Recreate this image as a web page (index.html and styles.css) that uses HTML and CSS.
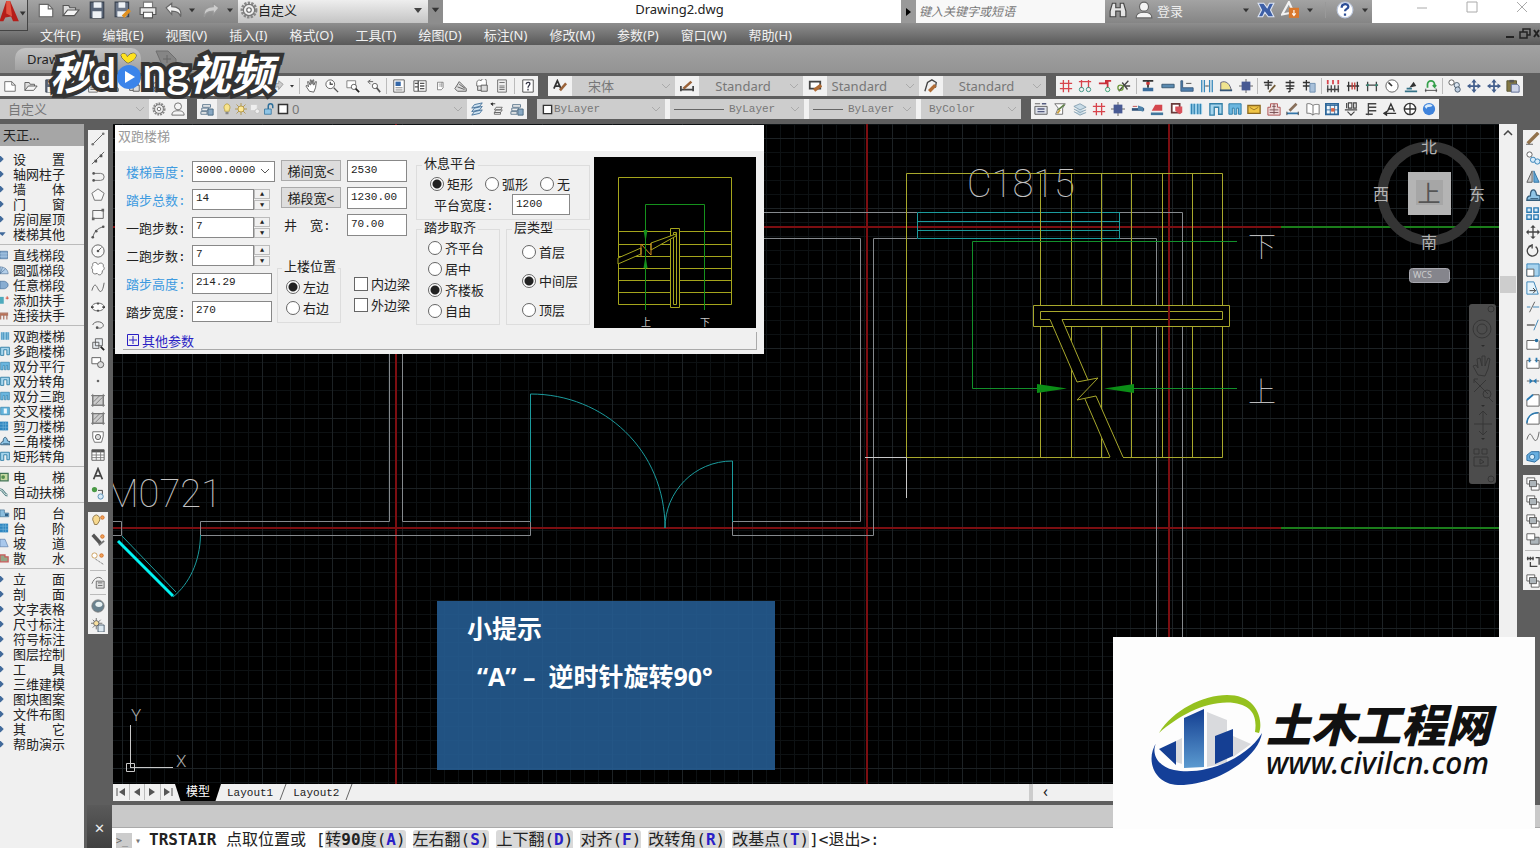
FILE: index.html
```html
<!DOCTYPE html>
<html lang="zh-CN">
<head>
    <meta charset="UTF-8">
    <meta name="viewport" content="width=device-width, initial-scale=1.0">
    <title>Drawing2.dwg</title>
    <link rel="stylesheet" href="styles.css">
</head>
<body>
    <svg class="sprite" aria-hidden="true">
        <!-- file and view -->
        <symbol id="new" viewBox="0 0 16 16"><path d="M2 3h8l4 4v7H2z" fill="#fff" stroke="#666"/><path d="M10 3v4h4" fill="none" stroke="#666"/></symbol>
        <symbol id="open" viewBox="0 0 16 16"><path d="M1 13V4h5l1 2h5v2" fill="#ddd" stroke="#555"/><path d="M1 13l4-5h10l-4 5z" fill="#f4f4f4" stroke="#555"/></symbol>
        <symbol id="save" viewBox="0 0 16 16"><path d="M2 1h12v14H2z" fill="#596577" stroke="#39424f"/><path d="M5 1h7v5H5zM4 9h8v6H4z" fill="#eef2f6"/></symbol>
        <symbol id="saveas" viewBox="0 0 16 16"><path d="M1 1h12v13H1z" fill="#6b7688" stroke="#39424f"/><path d="M4 1h6v5H4zM3 9h8v5H3z" fill="#eef2f6"/><path d="M8 14l6-6" stroke="#e09020" stroke-width="3"/></symbol>
        <symbol id="print" viewBox="0 0 16 16"><path d="M4 1h8v5H4z" fill="#fff" stroke="#777"/><path d="M1 6h14v6H1z" fill="#e8e8e8" stroke="#555"/><path d="M4 10h8v5H4z" fill="#fff" stroke="#555"/></symbol>
        <symbol id="undo" viewBox="0 0 16 16"><path d="M1 6l5-4v3c5 0 9 2 8 9-1-4-4-5-8-5v3z" fill="#f0f0f0" stroke="#666"/></symbol>
        <symbol id="redo" viewBox="0 0 16 16"><path d="M15 6l-5-4v3c-5 0-9 2-8 9 1-4 4-5 8-5v3z" fill="#ccc" stroke="#999"/></symbol>
        <symbol id="drop" viewBox="0 0 16 16"><path d="M4 6h8l-4 5z" fill="#333"/></symbol>
        <symbol id="gear" viewBox="0 0 16 16"><circle cx="8" cy="8" r="6" fill="none" stroke="#888" stroke-width="3" stroke-dasharray="2 1"/><circle cx="8" cy="8" r="5" fill="#eee" stroke="#777"/><circle cx="8" cy="8" r="2" fill="#fff" stroke="#666"/></symbol>
        <symbol id="hand" viewBox="0 0 16 16"><path d="M5 14L1 8l1-1 2 2-1-6h1l2 4V1h1l1 5 1-5h1v6l2-4h1l-1 7-2 5z" fill="#fff" stroke="#555"/></symbol>
        <symbol id="zoomr" viewBox="0 0 16 16"><circle cx="6" cy="6" r="5" fill="#fff" stroke="#555"/><path d="M6 3v3h3M10 10l5 5" fill="none" stroke="#555" stroke-width="1.5"/></symbol>
        <symbol id="zoomw" viewBox="0 0 16 16"><path d="M1 2h10v8H1z" fill="#fff" stroke="#777"/><circle cx="9" cy="9" r="3" fill="#fff" stroke="#555"/><path d="M11 11l4 4" stroke="#222" stroke-width="2"/></symbol>
        <symbol id="zoomp" viewBox="0 0 16 16"><path d="M7 3H2m2-2L1 3l3 3" fill="none" stroke="#555"/><circle cx="9" cy="8" r="3" fill="#fff" stroke="#555"/><path d="M11 10l4 5" stroke="#555" stroke-width="2"/></symbol>
        <symbol id="props" viewBox="0 0 16 16"><path d="M2 1h12v14H2z" fill="#fff" stroke="#555"/><path d="M4 3h6v5H4z" fill="#3467a8"/><path d="M4 10h8M4 12.500h8" stroke="#777"/></symbol>
        <symbol id="center" viewBox="0 0 16 16"><path d="M1 2h14v12H1z" fill="#fff" stroke="#555"/><path d="M6 2v12M8 5h5M8 8h5M8 11h5M2 5h4M2 9h4" stroke="#555" stroke-width="1.500"/></symbol>
        <symbol id="palette" viewBox="0 0 16 16"><path d="M4 2h9v9l-3 3H4z" fill="#fff" stroke="#555"/><path d="M6 5h5M6 8h5M11 2v8" stroke="#777"/></symbol>
        <symbol id="sheet" viewBox="0 0 16 16"><path d="M1 11l5-8 8 8v3H4z" fill="#ddd" stroke="#555"/><path d="M4 9l8 3M6 6l7 5" stroke="#555"/></symbol>
        <symbol id="markup" viewBox="0 0 16 16"><path d="M2 4a3 3 0 0 1 5-2 3 3 0 0 1 6 1v5H2z" fill="#fff" stroke="#666"/><path d="M7 7h7v7H7zM3 8v5h4" fill="#ddd" stroke="#555"/></symbol>
        <symbol id="calc" viewBox="0 0 16 16"><path d="M3 1h10v14H3z" fill="#eee" stroke="#666"/><path d="M5 4h6M5 8h6M5 10h6M5 12h6" stroke="#666"/></symbol>
        <symbol id="help" viewBox="0 0 16 16"><path d="M2 1h12v14H2z" fill="#fff" stroke="#444"/><path d="M6 6c0-3 5-3 4 0 0 1-2 2-2 4M8 11v2" fill="none" stroke="#334" stroke-width="1.500"/></symbol>
        <symbol id="person" viewBox="0 0 16 16"><circle cx="8" cy="5" r="4" fill="#f4f4f4" stroke="#666"/><path d="M1 15c0-4 3-5 7-5s7 1 7 5z" fill="#f4f4f4" stroke="#666"/></symbol>
        <symbol id="find" viewBox="0 0 16 16"><path d="M3 2h3v4h4V2h3l2 7v5h-5V9H6v5H1V9z" fill="#e4e4e4" stroke="#444"/></symbol>
        <symbol id="exchange" viewBox="0 0 16 16"><path d="M1 2h5l3 4 2-4h4l-3 6 3 6h-5l-3-4-2 4H1l3-6z" fill="#3d5fa6" stroke="#dde5f5"/></symbol>
        <symbol id="online" viewBox="0 0 16 16"><path d="M1 12L7 1l4 9z" fill="none" stroke="#f2f2f2" stroke-width="2"/><path d="M7 6h9v9H7z" fill="#d9782d"/><path d="M11.500 8v4M10 11l1.500 2 1.500-2" stroke="#fff" fill="none"/></symbol>
        <symbol id="question" viewBox="0 0 16 16"><circle cx="8" cy="8" r="7" fill="#fff" stroke="#bcc7dd"/><path d="M5 6c0-4 6-4 6-1 0 2-3 2-3 4M8 11v2" fill="none" stroke="#2b4d96" stroke-width="2"/></symbol>
        <!-- styles and layers -->
        <symbol id="textstyle" viewBox="0 0 16 16"><path d="M1 11L5 2l4 9M2.500 8h5" fill="none" stroke="#333" stroke-width="2"/><path d="M8 13l7-8" stroke="#9a6238" stroke-width="3"/></symbol>
        <symbol id="dimstyle" viewBox="0 0 16 16"><path d="M1 8v6M15 8v6M1 12h14" stroke="#444" stroke-width="2"/><path d="M4 11L13 3" stroke="#9a6238" stroke-width="3"/></symbol>
        <symbol id="tablestyle" viewBox="0 0 16 16"><path d="M2 3h12v8H2z" fill="#fff" stroke="#444" stroke-width="2"/><path d="M7 13l8-6" stroke="#b06c35" stroke-width="4"/></symbol>
        <symbol id="leaderstyle" viewBox="0 0 16 16"><path d="M1 14L4 4l5-3 5 3-1 6" fill="none" stroke="#444" stroke-width="1.500"/><path d="M6 14l7-7" stroke="#b06c35" stroke-width="4"/></symbol>
        <symbol id="layers" viewBox="0 0 16 16"><path d="M5 3l9-2-3 4-9 2zM5 7l9-2-3 4-9 2zM5 11l9-2-3 4-9 2z" fill="#cfe3f2" stroke="#3f6d96"/></symbol>
        <symbol id="layerprev" viewBox="0 0 16 16"><path d="M1 2h5M1 2l2-1v3z" stroke="#333"/><path d="M7 6h7l-2 3H5zM7 9h7l-2 3H5zM5 12h7v2H5z" fill="#eee" stroke="#666"/></symbol>
        <symbol id="layerstate" viewBox="0 0 16 16"><path d="M3 3h9v3H3zM2 7h8v3H2zM1 11h7v3H1z" fill="#eee" stroke="#58738a"/><path d="M9 8h6v7H9z" fill="#89a8c2" stroke="#42627c"/></symbol>
        <symbol id="bulb" viewBox="0 0 16 16"><path d="M8 1a5 5 0 0 1 3 8v2H5V9a5 5 0 0 1 3-8z" fill="#f8e48c" stroke="#b49b3d"/><path d="M6 12h4v3H6z" fill="#888"/></symbol>
        <symbol id="sun" viewBox="0 0 16 16"><path d="M8 0v16M0 8h16M2 2l12 12M14 2L2 14" stroke="#a98b34"/><circle cx="8" cy="8" r="4" fill="#ffe996" stroke="#a98b34"/></symbol>
        <symbol id="vpfreeze" viewBox="0 0 16 16"><path d="M2 2h9v8H2z" fill="#eee" stroke="#ccc"/><circle cx="11" cy="11" r="3" fill="#eee" stroke="#bbb"/></symbol>
        <symbol id="lock" viewBox="0 0 16 16"><path d="M2 8h9v7H2z" fill="#8fc5e6" stroke="#2f6f9a"/><path d="M7 8V4a3 3 0 0 1 6 0v3" fill="none" stroke="#2f6f9a" stroke-width="2"/></symbol>
        <symbol id="box" viewBox="0 0 16 16"><path d="M2 2h12v12H2z" fill="#fff" stroke="#333" stroke-width="2"/></symbol>
        <!-- building tools -->
        <symbol id="axis" viewBox="0 0 16 16"><path d="M5 1v14M11 1v14M1 5h14M1 11h14" stroke="#d8444c" stroke-width="1.500"/></symbol>
        <symbol id="axisno" viewBox="0 0 16 16"><path d="M1 3h14M4 1v9M12 1v9" stroke="#d8444c" stroke-width="1.500"/><circle cx="4" cy="12" r="2.500" fill="none" stroke="#2d8d7c"/><circle cx="12" cy="12" r="2.500" fill="none" stroke="#2d8d7c"/></symbol>
        <symbol id="axisone" viewBox="0 0 16 16"><path d="M1 5h8V2h6M11 2v8" fill="none" stroke="#c9303a" stroke-width="2"/><circle cx="11" cy="12" r="2.500" fill="none" stroke="#2d9d6c"/></symbol>
        <symbol id="axisdel" viewBox="0 0 16 16"><path d="M2 14L13 2M6 4l6 8M9 8h6" stroke="#444" stroke-width="1.500"/><circle cx="4" cy="10" r="3" fill="none" stroke="#6b963a" stroke-width="1.500"/></symbol>
        <symbol id="column" viewBox="0 0 16 16"><path d="M2 2h12M8 2v8" stroke="#333" stroke-width="2"/><path d="M6 5h4" stroke="#c33" stroke-width="3"/><path d="M2 10h12v4H2z" fill="#3a6d9c"/></symbol>
        <symbol id="wall" viewBox="0 0 16 16"><path d="M1 6h14v4H1z" fill="#5a8ab0" stroke="#33556f"/></symbol>
        <symbol id="wallcorner" viewBox="0 0 16 16"><path d="M3 2v8h12v4H1V2z" fill="#4e7fae" stroke="#38587a"/><path d="M7 5h6" stroke="#444"/></symbol>
        <symbol id="wallgap" viewBox="0 0 16 16"><path d="M2 1v14M5 1v14M11 1v14M14 1v14" stroke="#3989bb" stroke-width="1.500"/><path d="M6 8h4" stroke="#333"/></symbol>
        <symbol id="door" viewBox="0 0 16 16"><path d="M2 13V4c6-3 11 2 12 9z" fill="#efe38e" stroke="#557"/><path d="M1 13h14" stroke="#357" stroke-width="2"/></symbol>
        <symbol id="pillar" viewBox="0 0 16 16"><path d="M8 0v16M0 8h16" stroke="#555"/><path d="M3 3h10v10H3z" fill="#485a93"/></symbol>
        <symbol id="char" viewBox="0 0 16 16"><path d="M8 1v13l-2 1M3 4h10M3 8h10M4 11h8" fill="none" stroke="#333" stroke-width="1.500"/></symbol>
        <symbol id="charpen" viewBox="0 0 16 16"><path d="M6 1v11M1 4h10M2 7h8" fill="none" stroke="#333" stroke-width="1.500"/><path d="M7 15l7-8" stroke="#735c37" stroke-width="2"/></symbol>
        <symbol id="chartable" viewBox="0 0 16 16"><path d="M5 1v12M1 4h8M1 8h8" fill="none" stroke="#333" stroke-width="1.500"/><path d="M9 5h6v10H9z" fill="#a9c1da" stroke="#698aad"/></symbol>
        <symbol id="dimrow" viewBox="0 0 16 16"><path d="M2 1v5M8 1v5M14 1v5" stroke="#d8444c" stroke-width="2"/><path d="M1 12h14M2 7v8M6 7v8M10 7v8M14 7v8" stroke="#444" stroke-width="1.500"/></symbol>
        <symbol id="dimadd" viewBox="0 0 16 16"><path d="M1 8h14M3 3v11M13 3v11" stroke="#333" stroke-width="1.500"/><path d="M7 4v8M10 4v8" stroke="#c43b35" stroke-width="1.500"/></symbol>
        <symbol id="dim" viewBox="0 0 16 16"><path d="M1 7h14M3 3v11M13 3v11" stroke="#444" stroke-width="1.500"/><path d="M2 8l2-2M12 8l2-2" stroke="#2f8d77" stroke-width="2"/></symbol>
        <symbol id="radius" viewBox="0 0 16 16"><circle cx="8" cy="8" r="7" fill="#fff" stroke="#555"/><path d="M8 8L4 4" stroke="#333" stroke-width="2"/></symbol>
        <symbol id="level" viewBox="0 0 16 16"><path d="M6 10l5-7 3 5z" fill="#333"/><path d="M1 14h14M3 11h6" stroke="#347287" stroke-width="2"/></symbol>
        <symbol id="rotatedim" viewBox="0 0 16 16"><path d="M4 10V6a4 4 0 0 1 8 0v3l-2-2M12 9l2-2" fill="none" stroke="#35a04b" stroke-width="2"/><path d="M1 13h14M2 11v4M14 11v4" stroke="#444"/></symbol>
        <symbol id="copyobj" viewBox="0 0 16 16"><circle cx="4" cy="4" r="3" fill="#fff" stroke="#555"/><circle cx="10" cy="7" r="3" fill="#dbe6f1" stroke="#456"/><circle cx="11" cy="12" r="3" fill="#bccde0" stroke="#456"/></symbol>
        <symbol id="move" viewBox="0 0 16 16"><path d="M8 2v12M2 8h12" stroke="#435f8c" stroke-width="2"/><path d="M8 0l3 4H5zM8 16l3-4H5zM0 8l4-3v6zM16 8l-4-3v6z" fill="#435f8c"/></symbol>
        <symbol id="paste" viewBox="0 0 16 16"><path d="M1 2h11v12H1z" fill="#827743" stroke="#54502f"/><path d="M4 1h5v3H4z" fill="#555"/><path d="M6 6h7l2 2v7H6z" fill="#cfd6ea" stroke="#55648c"/></symbol>
        <symbol id="list" viewBox="0 0 16 16"><path d="M1 2h6M1 5h14v9H1z" fill="#dde1ea" stroke="#555"/><path d="M4 8h8M4 11h8M9 2h5" stroke="#555c80" stroke-width="1.500"/></symbol>
        <symbol id="edit" viewBox="0 0 16 16"><path d="M2 2h12l-3 5v7H3l3-7z" fill="#fff" stroke="#666"/><path d="M6 9l7-6" stroke="#60834b" stroke-width="2"/><path d="M5 13l3-4" stroke="#c79e41" stroke-width="2"/></symbol>
        <symbol id="stack" viewBox="0 0 16 16"><path d="M1 5l7-3 7 4-7 3zM1 8l7 4 7-3M1 11l7 4 7-3" fill="#c8dbe6" stroke="#829eaf"/></symbol>
        <symbol id="beam" viewBox="0 0 16 16"><path d="M1 7h14v3H1z" fill="#2f5177"/><path d="M8 4l6 2v5l-6-2z" fill="#4e83aa"/><path d="M2 5h5" stroke="#b44"/></symbol>
        <symbol id="roof" viewBox="0 0 16 16"><path d="M2 10l4-7h8v7z" fill="#d4464c"/><path d="M1 12h14v3H1z" fill="#41779e"/></symbol>
        <symbol id="room" viewBox="0 0 16 16"><path d="M2 2h9v10H2z" fill="#fff" stroke="#6b3b3b" stroke-width="2"/><path d="M6 5h8v7l-3 2-5-4z" fill="#d9505a"/></symbol>
        <symbol id="stair" viewBox="0 0 16 16"><path d="M1 2h14v12H1z" fill="#9ed1eb"/><path d="M3 2v12M6 2v12M10 2v12M13 2v12" stroke="#3485b3" stroke-width="1.500"/></symbol>
        <symbol id="stair2" viewBox="0 0 16 16"><path d="M1 15V2h14v12h-4V6H6v9z" fill="#a6d5ed" stroke="#3480a8" stroke-width="1.500"/></symbol>
        <symbol id="stair3" viewBox="0 0 16 16"><path d="M1 14V2h14v12h-3V7h-2v7H7V7H5v7z" fill="#6bb6df" stroke="#2578a5"/></symbol>
        <symbol id="board" viewBox="0 0 16 16"><path d="M1 4h14v9H1z" fill="#f0c545" stroke="#8d6920" stroke-width="1.500"/><path d="M3 6l5 3 5-3" fill="none" stroke="#987326"/></symbol>
        <symbol id="building" viewBox="0 0 16 16"><path d="M4 2h8v4h3v9H1V6h3z" fill="#eed8d8" stroke="#a94a4a"/><path d="M6 5h4M3 9h10M3 12h10M8 2v12" stroke="#74494d"/></symbol>
        <symbol id="section" viewBox="0 0 16 16"><path d="M1 13h13" stroke="#3376aa" stroke-width="2"/><path d="M4 10l8-8" stroke="#886f5b" stroke-width="3"/><path d="M1 11v4M14 11v4" stroke="#333"/></symbol>
        <symbol id="book" viewBox="0 0 16 16"><path d="M8 4C5 1 1 2 1 2v11s4-1 7 2c2-3 7-1 7-1V3s-5-1-7 1z" fill="#fff" stroke="#666"/><path d="M8 4v11" stroke="#666"/></symbol>
        <symbol id="table" viewBox="0 0 16 16"><path d="M1 2h14v12H1z" fill="#eff6fb" stroke="#2d679a" stroke-width="2"/><path d="M1 4h14M6 3v11M11 3v11M1 9h14" stroke="#2d679a"/><path d="M7 7h4v4H7z" fill="#dd6140"/></symbol>
        <symbol id="crossstair" viewBox="0 0 16 16"><path d="M1 2h14v12H1z" fill="#66b5dc" stroke="#2578a5"/><path d="M6 4h5v8H6z" fill="#eef7fc"/></symbol>
        <symbol id="hundred" viewBox="0 0 16 16"><path d="M3 1v6M1 9h14M5 1h4v6H5zM11 1h3v6h-3zM4 11l4 4 4-4" fill="none" stroke="#444" stroke-width="1.300"/></symbol>
        <symbol id="flag" viewBox="0 0 16 16"><path d="M5 1v14M5 2h9M5 6h9M5 10h9M2 14h8" stroke="#444" stroke-width="1.500"/></symbol>
        <symbol id="arrowA" viewBox="0 0 16 16"><path d="M5 11l4-9 4 9M6 8h6M1 13h14M1 13l3-2v4z" fill="none" stroke="#333" stroke-width="1.500"/></symbol>
        <symbol id="compass" viewBox="0 0 16 16"><circle cx="8" cy="8" r="6.500" fill="#fff" stroke="#333" stroke-width="1.500"/><path d="M8 2v12M2 8h12" stroke="#333" stroke-width="1.500"/></symbol>
        <symbol id="ball" viewBox="0 0 16 16"><circle cx="8" cy="8" r="7" fill="#3f83dc"/><path d="M3 5c2-3 7-3 9-1-2 3-6 0-7 4z" fill="#d9ecfc"/></symbol>
        <!-- draw tools -->
        <symbol id="line" viewBox="0 0 16 16"><path d="M2 14L14 2" stroke="#555"/><circle cx="14" cy="2" r="1.500" fill="#777"/><circle cx="2" cy="14" r="1.500" fill="#777"/></symbol>
        <symbol id="xline" viewBox="0 0 16 16"><path d="M1 15L15 1" stroke="#555"/><path d="M4 10h3v3H4zM10 4h3v3h-3z" fill="#555"/></symbol>
        <symbol id="pline" viewBox="0 0 16 16"><path d="M3 5h8a4 4 0 0 1 0 8H3" fill="none" stroke="#666"/><circle cx="3" cy="5" r="1.500" fill="#555"/><circle cx="3" cy="13" r="1.500" fill="#555"/></symbol>
        <symbol id="polygon" viewBox="0 0 16 16"><path d="M8 1l7 5-3 8H4L1 6z" fill="#f9f9f9" stroke="#666"/></symbol>
        <symbol id="rect" viewBox="0 0 16 16"><path d="M2 4h12v9H2z" fill="#f5f5f5" stroke="#555"/><path d="M1 12h3v3H1zM12 2h3v3h-3z" fill="#666"/></symbol>
        <symbol id="arc" viewBox="0 0 16 16"><path d="M2 15C3 8 7 4 14 2" fill="none" stroke="#555"/><g fill="#555"><circle cx="2" cy="14" r="1.500"/><circle cx="6" cy="7" r="1.500"/><circle cx="14" cy="2" r="1.500"/></g></symbol>
        <symbol id="circle" viewBox="0 0 16 16"><circle cx="8" cy="8" r="7" fill="#f9f9f9" stroke="#555"/><path d="M8 8l4-4" stroke="#555"/><circle cx="8" cy="8" r="1.500" fill="#555"/></symbol>
        <symbol id="cloud" viewBox="0 0 16 16"><path d="M8 3c2-3 7-2 6 2 2 2 1 4-1 5 0 5-4 6-6 3-4 2-6-1-5-4-2-2-1-4 0-5-1-4 4-5 6-1z" fill="#fff" stroke="#666"/></symbol>
        <symbol id="spline" viewBox="0 0 16 16"><path d="M1 11C4 1 6 5 8 9s5 6 7-7" fill="none" stroke="#555"/></symbol>
        <symbol id="ellipse" viewBox="0 0 16 16"><ellipse cx="8" cy="8" rx="7" ry="4.500" fill="#fafafa" stroke="#555"/><path d="M0 8h3M13 8h3M8 3v2M8 11v2" stroke="#444" stroke-width="2"/></symbol>
        <symbol id="earc" viewBox="0 0 16 16"><path d="M2 8c2-6 13-4 12 1-1 3-5 3-7 2" fill="none" stroke="#555"/><circle cx="7" cy="11" r="1.500" fill="#555"/></symbol>
        <symbol id="insert" viewBox="0 0 16 16"><path d="M5 2h8v8H5zM2 6h7v7H2z" fill="#e9eef2" stroke="#555"/><path d="M11 11l4 4" stroke="#222" stroke-width="2"/></symbol>
        <symbol id="block" viewBox="0 0 16 16"><path d="M1 3h10v7H1z" fill="#fff" stroke="#555"/><circle cx="11" cy="11" r="3.500" fill="#ddd" stroke="#555"/></symbol>
        <symbol id="point" viewBox="0 0 16 16"><circle cx="8" cy="8" r="1.500" fill="#666"/></symbol>
        <symbol id="hatch" viewBox="0 0 16 16"><path d="M2 3h12v11H2z" fill="#ccc" stroke="#555"/><path d="M0 3h16M0 14h16M2 1v15M14 1v15M3 10l7-7M5 13l8-8" stroke="#777"/></symbol>
        <symbol id="region" viewBox="0 0 16 16"><path d="M2 2h12v5l-2 7H4L2 9z" fill="#fff" stroke="#666"/><circle cx="8" cy="8" r="3" fill="#ddd" stroke="#555"/></symbol>
        <symbol id="grid" viewBox="0 0 16 16"><path d="M1 2h14v12H1z" fill="#fff" stroke="#555"/><path d="M1 3.500h14" stroke="#555" stroke-width="3"/><path d="M1 8h14M1 11h14M6 4v10M11 4v10" stroke="#777"/></symbol>
        <symbol id="mtext" viewBox="0 0 16 16"><path d="M3 14L8 2l5 12M5 10h6" fill="none" stroke="#444" stroke-width="2"/></symbol>
        <symbol id="addsel" viewBox="0 0 16 16"><circle cx="4" cy="4" r="3" fill="#4a9a45"/><path d="M8 5h5v4" fill="none" stroke="#333"/><circle cx="11" cy="12" r="3" fill="#d9eaf6" stroke="#4a85ae"/></symbol>
        <symbol id="light" viewBox="0 0 16 16"><path d="M6 1a5 5 0 0 1 3 8l-2 3H4L3 9a5 5 0 0 1 3-8z" fill="#f6d88e" stroke="#8a7142"/><circle cx="13" cy="4" r="2" fill="#f2a35a" stroke="#d06b23"/></symbol>
        <symbol id="spot" viewBox="0 0 16 16"><path d="M2 2l9 10" stroke="#555" stroke-width="4"/><path d="M9 14l6-5" stroke="#777" stroke-width="2"/><circle cx="13" cy="4" r="2" fill="#f2a35a" stroke="#d06b23"/></symbol>
        <symbol id="distant" viewBox="0 0 16 16"><circle cx="4" cy="4" r="3" fill="#fff" stroke="#c89a55"/><circle cx="12" cy="4" r="2" fill="#f2a35a" stroke="#d06b23"/><path d="M5 8l9 6" stroke="#777" stroke-dasharray="3 1"/></symbol>
        <symbol id="material" viewBox="0 0 16 16"><path d="M1 10c3-8 9-9 12-5" fill="none" stroke="#666"/><path d="M6 7h9v8H6z" fill="#ddd" stroke="#666"/><path d="M8 9h5M8 12h5" stroke="#666"/></symbol>
        <symbol id="sphere" viewBox="0 0 16 16"><circle cx="8" cy="8" r="7" fill="#69818e" stroke="#777"/><ellipse cx="9" cy="6" rx="4" ry="3" fill="#e8f1f2"/></symbol>
        <symbol id="sunprop" viewBox="0 0 16 16"><path d="M6 0v13M0 6h13M2 2l9 9M11 2l-9 9" stroke="#666"/><circle cx="6" cy="6" r="3" fill="#f8df9e" stroke="#666"/><path d="M8 8h7v8H8z" fill="#dce8f0" stroke="#456"/></symbol>
        <!-- modify tools -->
        <symbol id="erase" viewBox="0 0 16 16"><path d="M2 13L14 1" stroke="#91714b" stroke-width="4"/><path d="M0 14h8" stroke="#555"/></symbol>
        <symbol id="copy" viewBox="0 0 16 16"><circle cx="4" cy="4" r="3" fill="#fff" stroke="#555"/><circle cx="8" cy="10" r="3" fill="#d8ecfa" stroke="#2b7bb3"/><circle cx="13" cy="12" r="3" fill="#d8ecfa" stroke="#2b7bb3"/></symbol>
        <symbol id="mirror" viewBox="0 0 16 16"><path d="M7 1v13H1z" fill="#ccc" stroke="#555"/><path d="M9 1v13h6z" fill="#64a7d5" stroke="#2b6fa0"/></symbol>
        <symbol id="offset" viewBox="0 0 16 16"><path d="M1 14c0-4 2-5 4-5 0-9 6-9 7-1l4 1v5z" fill="#8fc5e6" stroke="#345c79" stroke-width="1.500"/><path d="M5 12h9" stroke="#345c79"/></symbol>
        <symbol id="array" viewBox="0 0 16 16"><path d="M1 1h5v5H1zM9 1h5v5H9zM1 9h5v5H1zM9 9h5v5H9z" fill="#d8ecfa" stroke="#2b7bb3" stroke-width="1.500"/></symbol>
        <symbol id="moveg" viewBox="0 0 16 16"><path d="M8 2v12M2 8h12" stroke="#444" stroke-width="1.500"/><path d="M8 0l3 3H5zM8 16l3-3H5zM0 8l3-3v6zM16 8l-3-3v6z" fill="#444"/></symbol>
        <symbol id="rotate" viewBox="0 0 16 16"><path d="M11 3a6 6 0 1 1-5-1M3 3l4-2v4" fill="none" stroke="#444" stroke-width="1.500"/></symbol>
        <symbol id="scale" viewBox="0 0 16 16"><path d="M1 1h14v14H1z" fill="#a8d3ee" stroke="#2b7bb3"/><path d="M1 7h8v8H1z" fill="#fff" stroke="#555"/></symbol>
        <symbol id="stretch" viewBox="0 0 16 16"><path d="M1 1h8l5 14H1z" fill="#e5f3fb" stroke="#2b7bb3"/><path d="M4 11h7M8 8l3 3-3 3" fill="none" stroke="#333"/></symbol>
        <symbol id="trim" viewBox="0 0 16 16"><path d="M1 8h4M8 8h7" stroke="#2b7bb3"/><path d="M4 14L10 2" stroke="#555"/></symbol>
        <symbol id="extend" viewBox="0 0 16 16"><path d="M1 8h9" stroke="#555" stroke-width="1.500"/><path d="M9 14l5-12" stroke="#2b7bb3"/></symbol>
        <symbol id="break" viewBox="0 0 16 16"><path d="M15 4v10H1V4h9" fill="#fff" stroke="#555"/><circle cx="12" cy="4" r="2" fill="#246da0"/></symbol>
        <symbol id="break2" viewBox="0 0 16 16"><path d="M6 5H1v9h14V5h-5" fill="#fff" stroke="#555"/><path d="M4 2v5M12 2v5" stroke="#2b7bb3" stroke-width="2"/></symbol>
        <symbol id="join" viewBox="0 0 16 16"><path d="M1 8h14" stroke="#555"/><path d="M4 5l4 3-4 3zM12 5L8 8l4 3z" fill="#2b7bb3"/></symbol>
        <symbol id="chamfer" viewBox="0 0 16 16"><path d="M1 15V8l7-6h7v13z" fill="#fff" stroke="#555"/><path d="M1 8l7-6" stroke="#2b7bb3" stroke-width="2"/></symbol>
        <symbol id="fillet" viewBox="0 0 16 16"><path d="M1 15c0-8 5-13 14-13v13z" fill="#fff" stroke="#555"/><path d="M1 14c0-7 5-12 13-12" fill="none" stroke="#2b7bb3" stroke-width="1.500"/></symbol>
        <symbol id="explode" viewBox="0 0 16 16"><path d="M1 7l5-4h9v8l-5 4-9-2z" fill="#67aee0" stroke="#24669a"/><circle cx="7" cy="9" r="3" fill="#d8edfa" stroke="#24669a"/></symbol>
        <symbol id="order" viewBox="0 0 16 16"><path d="M1 1h9v7H1z" fill="#fff" stroke="#555"/><path d="M6 8h9v7H6z" fill="#fff" stroke="#555"/><path d="M4 4h8v7H4z" fill="#adb5ba" stroke="#555"/></symbol>
        <symbol id="order2" viewBox="0 0 16 16"><path d="M5 6h10v8H5z" fill="#adb5ba" stroke="#555"/><path d="M1 2h9v7H1z" fill="#fff" stroke="#555"/></symbol>
        <symbol id="abc" viewBox="0 0 16 16"><path d="M1 4h8M2 2v4M5 2v4M8 2v4M5 8v5h8M11 3h4v8" fill="none" stroke="#444" stroke-width="1.500"/></symbol>
        <!-- palette -->
        <symbol id="closed" viewBox="0 0 16 16"><path d="M0 3h1l5 5-5 5H0z" fill="#416a9b"/></symbol>
        <symbol id="opened" viewBox="0 0 16 16"><path d="M0 5h9l-5 6-4-3z" fill="#416a9b"/></symbol>
        <symbol id="flight" viewBox="0 0 16 16"><path d="M0 2h12v12H0z" fill="#88add2" stroke="#3d6794"/><path d="M0 6h12M0 10h12" stroke="#b5d0e8"/></symbol>
        <symbol id="anyflight" viewBox="0 0 16 16"><path d="M0 2h7c8 2 8 10 0 12H0z" fill="#88add2" stroke="#3d6794"/></symbol>
        <symbol id="arcflight" viewBox="0 0 16 16"><path d="M0 3c8 0 13 5 13 11H0z" fill="#b5d0ea" stroke="#4b6e95"/><path d="M0 14l9-8M0 14l4-10" stroke="#4b6e95"/></symbol>
        <symbol id="rail" viewBox="0 0 16 16"><path d="M0 3h6v11H0z" fill="#4eaabd"/><path d="M9 5h5M11.500 2v5" stroke="#d64c37" stroke-width="1.500"/></symbol>
        <symbol id="railjoin" viewBox="0 0 16 16"><path d="M0 5h12v3H0zM1 8v7M6 8v7M11 8v7" fill="#c96b43" stroke="#ad7868" stroke-width="2"/></symbol>
        <symbol id="lift" viewBox="0 0 16 16"><path d="M0 2h13v12H0z" fill="#c5d9a1" stroke="#427455" stroke-width="2"/><circle cx="5" cy="8" r="3" fill="#538d4d"/></symbol>
        <symbol id="escalator" viewBox="0 0 16 16"><path d="M0 4c6 0 6 9 12 9" fill="none" stroke="#4c7c82" stroke-width="4"/><path d="M0 4c6 0 6 9 12 9" fill="none" stroke="#eef3ed" stroke-width="1.500"/></symbol>
        <symbol id="balcony" viewBox="0 0 16 16"><path d="M0 3h7v5h7v6H0z" fill="#8cbede" stroke="#3c6d90"/><path d="M8 9h5v4H8z" fill="#2f5f86"/></symbol>
        <symbol id="steps" viewBox="0 0 16 16"><path d="M0 1h13v14H0z" fill="#2f86c0"/><path d="M0 5h13M0 10h13M5 1v14M9 1v14" stroke="#77b7de"/></symbol>
        <symbol id="ramp" viewBox="0 0 16 16"><path d="M0 2h8l5 12H0z" fill="#a9c8ec" stroke="#5577a5"/></symbol>
        <symbol id="apron" viewBox="0 0 16 16"><path d="M0 3h8v3h5v8H0z" fill="#93a585" stroke="#c75959" stroke-width="2"/></symbol>
    </svg>

    <div class="app">
        <header class="titlebar">
            <button class="app-logo" aria-label="A">
                <svg viewBox="0 0 28 31"><path d="M-1 22L6 1h4l9 21h-6l-2-5-6 1-2 4z" fill="#b51e19"/><path d="M6 1h4l2 16-6-3z" fill="#e25442"/><path d="M20 12h6l-3 4z" fill="#333"/></svg>
            </button>
            <div class="quick" data-icons="new open save saveas print undo drop redo drop"></div>
            <label class="workspace-pick">
                <svg><use href="#gear"/></svg>
                <select aria-label="工作空间"><option>自定义</option></select>
            </label>
            <button class="more" aria-label="更多"><svg><use href="#drop"/></svg></button>
            <h1 class="doc-title">Drawing2.dwg</h1>
            <button class="search-arrow" aria-label="展开"><svg viewBox="0 0 6 10"><path d="M0 1l5 4-5 4z"/></svg></button>
            <input class="search" type="text" placeholder="键入关键字或短语" aria-label="搜索">
            <div class="account">
                <button aria-label="查找"><svg><use href="#find"/></svg></button>
                <button class="login"><svg><use href="#person"/></svg>登录</button>
                <div class="account-icons" data-icons="drop exchange online drop | question drop"></div>
            </div>
            <div class="window-buttons">
                <button aria-label="最小化"><svg viewBox="0 0 12 12"><path d="M1 7h10"/></svg></button>
                <button aria-label="最大化"><svg viewBox="0 0 12 12"><path d="M1 1h10v10H1z"/></svg></button>
                <button aria-label="关闭"><svg viewBox="0 0 12 12"><path d="M1 1l10 10M11 1L1 11"/></svg></button>
            </div>
        </header>

        <nav class="menubar">
            <a href="#">文件(F)</a><a href="#">编辑(E)</a><a href="#">视图(V)</a><a href="#">插入(I)</a>
            <a href="#">格式(O)</a><a href="#">工具(T)</a><a href="#">绘图(D)</a><a href="#">标注(N)</a>
            <a href="#">修改(M)</a><a href="#">参数(P)</a><a href="#">窗口(W)</a><a href="#">帮助(H)</a>
            <span class="doc-buttons">
                <svg viewBox="0 0 34 14"><path d="M1 10h8" stroke="#222" stroke-width="2"/><path d="M15 5h7v6h-7zM18 5V2h7v6h-3" fill="none" stroke="#222" stroke-width="1.500"/><path d="M29 3l5 7M34 3l-5 7" stroke="#222" stroke-width="2"/></svg>
            </span>
        </nav>

        <div class="file-tabs">
            <button class="file-tab">Draw</button>
            <button class="add-tab" aria-label="新建"><svg viewBox="0 0 22 22"><path d="M1 3h12l8 8v8H8z" fill="#858585" stroke="#6e6e6e"/><path d="M12 7v8M8 11h8" stroke="#666"/></svg></button>
        </div>

        <div class="toolbars">
            <div class="tool-row">
                <div class="bar bar-standard" data-icons="new open save print calc sheet markup copyobj paste edit undo drop undo drop redo drop | hand zoomr zoomw zoomp | props center palette sheet markup calc | help"></div>
                <div class="bar bar-styles">
                    <svg><use href="#textstyle"/></svg>
                    <select aria-label="文字样式"><option>宋体</option></select>
                    <svg><use href="#dimstyle"/></svg>
                    <select aria-label="标注样式"><option>Standard</option></select>
                    <svg><use href="#tablestyle"/></svg>
                    <select class="near" aria-label="表格样式"><option>Standard</option></select>
                    <svg><use href="#leaderstyle"/></svg>
                    <select aria-label="引线样式"><option>Standard</option></select>
                </div>
                <div class="bar bar-arch" data-icons="axis axisno axisone axisdel | column wall wallcorner wallgap door pillar | charpen char chartable | dimrow dimadd dim radius level rotatedim | copyobj move move paste"></div>
            </div>
            <div class="tool-row">
                <div class="bar bar-workspace">
                    <select aria-label="工作空间"><option>自定义</option></select>
                    <svg><use href="#gear"/></svg>
                    <svg><use href="#person"/></svg>
                </div>
                <div class="bar bar-layers">
                    <svg><use href="#layerstate"/></svg>
                    <div class="layer-pick">
                        <svg><use href="#bulb"/></svg><svg><use href="#sun"/></svg><svg><use href="#vpfreeze"/></svg><svg><use href="#lock"/></svg><svg><use href="#box"/></svg>
                        <select aria-label="图层"><option>0</option></select>
                    </div>
                    <svg><use href="#layers"/></svg>
                    <svg><use href="#layerprev"/></svg>
                    <svg><use href="#layerstate"/></svg>
                </div>
                <div class="bar bar-bylayer">
                    <label class="pick color"><svg><use href="#box"/></svg><select aria-label="颜色"><option>ByLayer</option></select></label>
                    <label class="pick ltype"><i></i><select aria-label="线型"><option>ByLayer</option></select></label>
                    <label class="pick lweight"><i></i><select aria-label="线宽"><option>ByLayer</option></select></label>
                    <label class="pick plot"><select aria-label="打印样式"><option>ByColor</option></select></label>
                </div>
                <div class="bar bar-arch2" data-icons="list edit stack axis pillar beam roof room stair stair2 stair3 board building section book table hundred flag arrowA compass ball"></div>
            </div>
        </div>

        <div class="main">
            <aside class="palette">
                <h2>天正...</h2>
                <ul>
                    <li data-icon="closed">设　　置</li>
                    <li data-icon="closed">轴网柱子</li>
                    <li data-icon="closed">墙　　体</li>
                    <li data-icon="closed">门　　窗</li>
                    <li data-icon="closed">房间屋顶</li>
                    <li data-icon="opened">楼梯其他</li>
                </ul>
                <ul>
                    <li data-icon="flight">直线梯段</li>
                    <li data-icon="arcflight">圆弧梯段</li>
                    <li data-icon="anyflight">任意梯段</li>
                    <li data-icon="rail">添加扶手</li>
                    <li data-icon="railjoin">连接扶手</li>
                </ul>
                <ul>
                    <li data-icon="stair">双跑楼梯</li>
                    <li data-icon="stair2">多跑楼梯</li>
                    <li data-icon="stair3">双分平行</li>
                    <li data-icon="stair2">双分转角</li>
                    <li data-icon="stair3">双分三跑</li>
                    <li data-icon="crossstair">交叉楼梯</li>
                    <li data-icon="steps">剪刀楼梯</li>
                    <li data-icon="offset">三角楼梯</li>
                    <li data-icon="stair2">矩形转角</li>
                </ul>
                <ul>
                    <li data-icon="lift">电　　梯</li>
                    <li data-icon="escalator">自动扶梯</li>
                </ul>
                <ul>
                    <li data-icon="balcony">阳　　台</li>
                    <li data-icon="steps">台　　阶</li>
                    <li data-icon="ramp">坡　　道</li>
                    <li data-icon="apron">散　　水</li>
                </ul>
                <ul>
                    <li data-icon="closed">立　　面</li>
                    <li data-icon="closed">剖　　面</li>
                    <li data-icon="closed">文字表格</li>
                    <li data-icon="closed">尺寸标注</li>
                    <li data-icon="closed">符号标注</li>
                    <li data-icon="closed">图层控制</li>
                    <li data-icon="closed">工　　具</li>
                    <li data-icon="closed">三维建模</li>
                    <li data-icon="closed">图块图案</li>
                    <li data-icon="closed">文件布图</li>
                    <li data-icon="closed">其　　它</li>
                    <li data-icon="closed">帮助演示</li>
                </ul>
            </aside>

            <div class="work">
                <div class="stage">
                    <div class="side-tools">
                        <div class="vbar vbar-draw" data-icons="line xline pline polygon rect arc circle cloud spline ellipse earc insert block point hatch hatch region grid mtext addsel"></div>
                        <div class="vbar vbar-render" data-icons="light spot distant | material | sphere sunprop"></div>
                    </div>

                    <div class="view">
                        <div class="canvas">
                            <svg class="drawing" viewBox="113 124 1386 660" preserveAspectRatio="xMinYMin slice">
                                <defs>
                                    <pattern id="minor" x="122" y="208" width="14" height="14" patternUnits="userSpaceOnUse"><path d="M0 .5H14M.5 0V14" stroke="#0d1113"/></pattern>
                                    <pattern id="major" x="122" y="208" width="70" height="70" patternUnits="userSpaceOnUse"><path d="M0 .5H70M.5 0V70" stroke="#1d2225"/></pattern>
                                </defs>
                                <rect x="113" y="124" width="1386" height="660" fill="url(#minor)"/>
                                <rect x="113" y="124" width="1386" height="660" fill="url(#major)"/>
                                <!-- axes -->
                                <path class="red" d="M396 124V784M867 124V784M1169 124V784M113 227H1281M113 528H1281"/>
                                <path class="axis-green" d="M1281 227H1499M1281 528H1499"/>
                                <!-- walls -->
                                <path class="walls" d="M764 212.500H917M1119 212.500H1182.500V784M764 238.500H860.500V521.500H732.500V535.500H873.500V238.500H917M1119 238.500H1156.500V784M389.500 354V521.500H200.500V535.500H530.500V521.500H402.500V354M113 521.500H121.500V535.500H113"/>
                                <!-- window and doors -->
                                <path class="cyan" d="M917.500 212.500H1119.500V238.500H917.500zM917.500 221.500H1119.500M917.500 230.500H1119.500"/>
                                <path class="cyan" d="M530.500 522V394C604 394 665 450 665 528C665 492 694 461 732.500 461V522M122 536L176 592M200.500 535C200 562 189 584 173 597"/>
                                <path class="leaf" d="M118 541L173 596"/>
                                <text class="cad" x="967" y="197">C1815</text>
                                <text class="cad" x="106" y="507">M0721</text>
                                <!-- stair -->
                                <g class="yellow">
                                    <path d="M1110 457.500H906.500V173.500H1222.500V457.500H1123"/>
                                    <path d="M1040.500 174V305M1071.500 174V305M1101.500 174V305M1131.500 174V305M1162.500 174V305M1192.500 174V305M1040.500 326V458M1071.500 326V458M1101.500 326V458M1131.500 326V458M1162.500 326V458M1192.500 326V458"/>
                                    <path d="M1033.500 305.500H1229.500V326.500H1033.500z" class="mask"/>
                                    <path d="M1050 319L1077 382L1088 380L1062 319zM1085 399L1096 396L1123 458H1110z" class="gap"/>
                                    <path d="M1050 319.500H1040.500V311.500H1222.500V319.500H1062L1088 380M1050 319.500L1077 382L1098 378L1077 400L1096 396L1123 457M1085 399L1110 457"/>
                                </g>
                                <path class="red" d="M1169 306V326"/>
                                <path class="green" d="M1237 241.500H972.500V388.500H1040M1237 388.500H1130"/>
                                <path d="M1037 384L1067 388.500L1037 393zM1134 384L1104 388.500L1134 393z" fill="#0b8d16"/>
                                <path d="M865 457.500H906.500V498" class="cursor"/>
                                <text class="cad-cn" x="1248" y="257">下</text>
                                <text class="cad-cn" x="1248" y="402">上</text>
                                <!-- ucs -->
                                <path d="M126.500 763.500H134.500V771.500H126.500zM130.500 768V725M130 767.500H173" class="ucs"/>
                                <text class="ucs-label" x="131" y="721">Y</text>
                                <text class="ucs-label" x="176" y="767">X</text>
                                <!-- view cube -->
                                <circle cx="1429.500" cy="193.500" r="47" fill="none" stroke="#343434" stroke-width="10"/>
                                <rect x="1408" y="172" width="43" height="43" fill="#b4b4b4"/>
                                <rect x="1416" y="180" width="27" height="25" fill="#a6a6a6"/>
                                <text class="cube-top" x="1429" y="202">上</text>
                                <text class="cube" x="1429" y="153">北</text>
                                <text class="cube" x="1429" y="248">南</text>
                                <text class="cube" x="1381" y="200">西</text>
                                <text class="cube" x="1477" y="200">东</text>
                                <rect x="1409.500" y="268.500" width="40" height="14" rx="3" fill="#85858c" stroke="#a8a8b0"/>
                                <text class="wcs" x="1413" y="278">WCS</text>
                                <!-- navigation bar -->
                                <rect x="1469" y="304" width="27" height="180" rx="3" fill="#4c4c4c"/>
                                <g fill="none" stroke="#363636">
                                    <circle cx="1491" cy="309" r="3"/><circle cx="1482" cy="329" r="9"/><circle cx="1482" cy="329" r="5"/>
                                    <path d="M1478 375l-5-9 3-1 2 3-1-9 3-1 2 8v-10h3v10l3-8 2 1-2 10-3 7zM1474 380l14 14M1486 380l-12 12M1474 383v-4h4M1489 398l4 4M1483 412v22M1474 424h18M1479 415l4-4 4 4M1479 431l4 4 4-4M1474 449h5v5h-5zM1482 449h5v5h-5zM1474 457h14v9h-14zM1480 459l4 3-4 2z"/>
                                    <circle cx="1487" cy="394" r="4"/><circle cx="1491" cy="479" r="3"/>
                                </g>
                                <path d="M1481 345h4l-2 2zM1481 405h4l-2 2zM1481 438h4l-2 2z" fill="#2c2c2c"/>
                            </svg>

                            <form class="dialog">
                                <h2>双跑楼梯</h2>
                                <div class="dialog-body">
                                    <div class="fields">
                                        <label class="blue" for="height">楼梯高度:</label>
                                        <select id="height"><option>3000.0000</option></select>
                                        <label class="blue" for="total">踏步总数:</label>
                                        <span class="spin"><input id="total" type="text" value="14"><b><button type="button">▲</button><button type="button">▼</button></b></span>
                                        <label for="first">一跑步数:</label>
                                        <span class="spin"><input id="first" type="text" value="7"><b><button type="button">▲</button><button type="button">▼</button></b></span>
                                        <label for="second">二跑步数:</label>
                                        <span class="spin"><input id="second" type="text" value="7"><b><button type="button">▲</button><button type="button">▼</button></b></span>
                                        <label class="blue" for="rise">踏步高度:</label>
                                        <input id="rise" type="text" value="214.29">
                                        <label for="tread">踏步宽度:</label>
                                        <input id="tread" type="text" value="270">
                                    </div>
                                    <div class="widths">
                                        <div class="width-grid">
                                            <button type="button">梯间宽&lt;</button><input type="text" value="2530" aria-label="梯间宽">
                                            <button type="button">梯段宽&lt;</button><input type="text" value="1230.00" aria-label="梯段宽">
                                            <label for="well">井　宽:</label><input id="well" type="text" value="70.00">
                                        </div>
                                        <div class="side-grid">
                                            <fieldset>
                                                <legend>上楼位置</legend>
                                                <label><input type="radio" name="side" checked>左边</label>
                                                <label><input type="radio" name="side">右边</label>
                                            </fieldset>
                                            <div class="beams">
                                                <label><input type="checkbox">内边梁</label>
                                                <label><input type="checkbox">外边梁</label>
                                            </div>
                                        </div>
                                    </div>
                                    <div class="options">
                                        <fieldset class="landing">
                                            <legend>休息平台</legend>
                                            <div class="shapes">
                                                <label><input type="radio" name="shape" checked>矩形</label>
                                                <label><input type="radio" name="shape">弧形</label>
                                                <label><input type="radio" name="shape">无</label>
                                            </div>
                                            <div class="landing-width"><label for="landing">平台宽度:</label><input id="landing" type="text" value="1200"></div>
                                        </fieldset>
                                        <fieldset class="align">
                                            <legend>踏步取齐</legend>
                                            <label><input type="radio" name="align">齐平台</label>
                                            <label><input type="radio" name="align">居中</label>
                                            <label><input type="radio" name="align" checked>齐楼板</label>
                                            <label><input type="radio" name="align">自由</label>
                                        </fieldset>
                                        <fieldset class="floor">
                                            <legend>层类型</legend>
                                            <label><input type="radio" name="floor">首层</label>
                                            <label><input type="radio" name="floor" checked>中间层</label>
                                            <label><input type="radio" name="floor">顶层</label>
                                        </fieldset>
                                    </div>
                                    <svg class="preview" viewBox="594 157 162 171">
                                        <rect x="594" y="157" width="162" height="171" fill="#000"/>
                                        <g fill="none" stroke="#a5a51c">
                                            <path d="M618.500 177.500H731.500V304.500H618.500zM618.500 231.500H731.500M618.500 244.500H731.500M618.500 256.500H731.500M618.500 268.500H731.500M618.500 280.500H731.500M618.500 292.500H731.500"/>
                                            <path d="M670.500 228.500h9v79h-9z" fill="#000"/><path d="M673.500 232.500h3v72h-3z"/>
                                            <path d="M618 258L641 248V254L618 264zM651 243L676 234V236L651 250z" fill="#000"/>
                                            <path d="M641 256V244L651 255V243" stroke="#d08c20"/>
                                        </g>
                                        <path d="M645.500 310V204.500H704.500V310" fill="none" stroke="#15911c"/>
                                        <path d="M643.500 230h4l-2 12zM645.500 256l2 12h-4z" fill="#15911c"/>
                                        <text x="641" y="326">上</text><text x="700" y="326">下</text>
                                    </svg>
                                </div>
                                <div class="more-params"><button type="button"><svg viewBox="0 0 12 12"><path d="M.5 .5h11v11H.5zM2 6h8M6 2v8" fill="none" stroke="#2a1fc4"/></svg>其他参数</button></div>
                            </form>

                            <div class="tip">
                                <p>小提示</p>
                                <p class="tip-key">“A” –&nbsp; 逆时针旋转90°</p>
                            </div>
                        </div>
                        <div class="layout-tabs">
                            <svg class="pager" viewBox="0 0 62 16"><path d="M4 4v8M59 4v8" stroke="#555"/><path d="M12 4v8L6 8zM27 4v8l-6-4zM36 4v8l6-4zM51 4v8l6-4z" fill="#555"/><path d="M16.500 0v16M31.500 0v16M47.500 0v16" stroke="#bbb"/></svg>
                            <button class="current">模型</button>
                            <button>Layout1</button>
                            <svg class="slash" viewBox="0 0 8 16"><path d="M7 0L1 16" stroke="#666"/></svg>
                            <button>Layout2</button>
                            <svg class="slash" viewBox="0 0 8 16"><path d="M7 0L1 16" stroke="#666"/></svg>
                            <span class="hscroll">‹</span>
                        </div>
                    </div>

                    <div class="vscroll"><svg viewBox="0 0 10 6"><path d="M1 5l4-4 4 4" fill="none" stroke="#444" stroke-width="1.500"/></svg><i></i></div>
                    <div class="side-tools right">
                        <div class="vbar vbar-modify" data-icons="erase copy mirror offset array moveg rotate scale stretch trim extend break break2 join chamfer fillet spline explode"></div>
                        <div class="vbar vbar-order" data-icons="order order order order2 | abc order"></div>
                    </div>
                </div>

                <div class="command">
                    <div class="command-grip"><button aria-label="关闭">✕</button></div>
                    <div class="command-box">
                        <div class="history"></div>
                        <div class="prompt">
                            <span class="prompt-icon">&gt;_</span><span class="prompt-drop">▾</span>
                            <p><strong>TRSTAIR</strong> 点取位置或 [<button>转<strong>90</strong>度(<b>A</b>)</button><button>左右翻(<b>S</b>)</button><button>上下翻(<b>D</b>)</button><button>对齐(<b>F</b>)</button><button>改转角(<b>R</b>)</button><button>改基点(<b>T</b>)</button>]&lt;退出&gt;:</p>
                        </div>
                    </div>
                </div>
            </div>
        </div>

        <div class="video-logo">
            <span>秒</span><span class="latin">d</span><svg viewBox="0 0 26 44"><path d="M5 5c2-3 6-1 6 2 3-4 8-5 9-2 0 4-4 6-8 8-3-2-6-4-7-8z" fill="#ffe21f" stroke="#333" stroke-width="1"/><circle cx="13" cy="27" r="12" fill="#3b84ea"/><path d="M9 21l10 6-10 6z" fill="#fff"/></svg><span class="latin">ng</span><span>视频</span>
        </div>

        <div class="site-logo">
            <svg viewBox="1150 695 116 94">
                <defs><linearGradient id="tower" x1="0" y1="0" x2="0" y2="1"><stop offset="0" stop-color="#133e91"/><stop offset="1" stop-color="#5b9ad0"/></linearGradient></defs>
                <path d="M1207 713l20 8v43l-20 4zM1233 737l18 8-18 13zM1176 742l6-3v26l-6-2z" fill="#d9dadd"/>
                <path d="M1184 719l20-9v58l-20 1z" fill="url(#tower)"/>
                <path d="M1159 750l17-8v24zM1215 737l18-7v27l-18 8z" fill="#153f93"/>
                <path d="M1159 734c20-33 75-50 94-28 7 8 9 20 6 28l-4-1c2-14-1-26-21-29-27-3-54 12-75 30z" fill="#95c11f"/>
                <path d="M1157 743c-6 8-2 24 17 28 29 6 72-10 88-37-4 26-48 53-84 52-25-1-33-27-21-43z" fill="#143f98"/>
            </svg>
            <div class="site-name"><strong>土木工程网</strong><span>www.civilcn.com</span></div>
        </div>
    </div>
    <script src="script.js"></script>
</body>
</html>
```
FILE: styles.css
```css
* {
    box-sizing: border-box;
}
body {
    margin: 0;
    font-family: "Noto Sans", "Noto Sans CJK SC", sans-serif;
    font-size: 13px;
    color: #222;
}
button, input, select {
    font: inherit;
    color: inherit;
    margin: 0;
    padding: 0;
    border: none;
    border-radius: 0;
    background: none;
}
button {
    white-space: nowrap;
}
h1, h2, p, ul {
    margin: 0;
    padding: 0;
    font-size: 13px;
    font-weight: normal;
}
.sprite {
    position: absolute;
    width: 0;
    height: 0;
}
.app {
    position: relative;
    display: flex;
    flex-direction: column;
    height: 100vh;
    overflow: hidden;
    background: #5e5e5e;
}
select {
    appearance: none;
    background: url("data:image/svg+xml,%3Csvg xmlns='http://www.w3.org/2000/svg' width='10' height='6'%3E%3Cpath d='M1 1l4 4 4-4' fill='none' stroke='%23aaa'/%3E%3C/svg%3E") no-repeat right 4px center;
}

/* title bar */
.titlebar {
    display: flex;
    height: 23px;
    background: #fff;
}
.app-logo {
    position: relative;
    z-index: 2;
    width: 28px;
    height: 31px;
    background: linear-gradient(#b5b5b5, #858585);
    border-right: 1px solid #444;
    border-bottom: 1px solid #444;
}
.app-logo svg {
    display: block;
    width: 28px;
    height: 30px;
}
.quick {
    display: flex;
    align-items: center;
    width: 210px;
    padding: 0 2px 3px 5px;
    background: linear-gradient(#a3a3a3, #858585);
}
.quick svg, .account svg {
    display: block;
    width: 18px;
    height: 18px;
    margin: 0 auto;
}
.quick .tool {
    flex: 1 1 26px;
}
.quick .tool.drop, .account .tool.drop {
    flex: none;
    width: 12px;
}
.titlebar .drop svg {
    width: 12px;
    height: 12px;
}
.workspace-pick {
    display: flex;
    align-items: center;
    width: 190px;
    padding: 0 2px 3px 2px;
    background: linear-gradient(#eee, #c4c4c4);
}
.workspace-pick svg {
    width: 18px;
    height: 18px;
}
.workspace-pick select {
    flex: 1;
    background-image: url("data:image/svg+xml,%3Csvg xmlns='http://www.w3.org/2000/svg' width='8' height='5'%3E%3Cpath d='M0 0h8L4 5z' fill='%23444'/%3E%3C/svg%3E");
}
.more {
    width: 15px;
    background: #8d8d8d;
}
.more svg {
    width: 15px;
    height: 15px;
}
.doc-title {
    flex: 1;
    padding-left: 15px;
    font-size: 13px;
    line-height: 18px;
    text-align: center;
}
.search-arrow {
    width: 15px;
    background: #999;
}
.search-arrow svg {
    width: 6px;
    height: 10px;
}
.search {
    width: 189px;
    padding: 0 3px;
    background: #f8f8f8;
    font-size: 12px;
    font-style: italic;
}
.search::placeholder {
    color: #777;
}
.account {
    display: flex;
    align-items: center;
    width: 267px;
    padding: 0 1px 3px 4px;
    gap: 8px;
    background: linear-gradient(#a3a3a3, #858585);
    color: #eee;
}
.login {
    display: flex;
    gap: 4px;
}
.account-icons {
    display: flex;
    flex: 1;
    align-items: center;
    justify-content: flex-end;
    gap: 4px;
}
.account .tool {
    flex: none;
    width: 20px;
}
.account .split {
    width: 1px;
    margin: 0 5px;
    background: #999;
}
.window-buttons {
    display: flex;
    justify-content: space-between;
    width: 168px;
    padding: 0 12px 10px 44px;
}
.window-buttons svg {
    display: block;
    width: 12px;
    height: 12px;
    fill: none;
    stroke: #aaa;
}

/* menu and file tabs */
.menubar {
    display: flex;
    align-items: center;
    gap: 22px;
    height: 22px;
    padding-left: 40px;
    background: linear-gradient(#8e8e8e, #595959);
}
.menubar a {
    color: #f0f0f0;
    text-decoration: none;
}
.doc-buttons {
    margin-left: auto;
}
.doc-buttons svg {
    display: block;
    width: 36px;
    height: 14px;
}
.file-tabs {
    display: flex;
    gap: 14px;
    height: 28px;
    padding: 3px 0 3px 15px;
    background: linear-gradient(#a2a2a2, #939393);
}
.file-tab {
    width: 126px;
    padding-left: 12px;
    text-align: left;
    background: linear-gradient(#c4c4c4, #a2a2a2);
    border-radius: 10px 10px 0 0;
}
.add-tab svg {
    display: block;
    width: 22px;
    height: 22px;
}

/* tool rows */
.toolbars {
    display: grid;
    gap: 3px;
    padding: 3px 0 5px;
}
.tool-row {
    display: flex;
    gap: 10px;
    height: 20px;
}
.bar, .vbar {
    display: flex;
    align-items: center;
    background: #f1f1f1;
}
.bar svg, .vbar svg {
    display: block;
    width: 14px;
    height: 14px;
    margin: 0 auto;
}
.tool {
    flex: 1 1 19px;
    min-width: 0;
}
.bar .tool.drop {
    flex-basis: 8px;
}
.bar .tool.drop svg {
    width: 8px;
    height: 8px;
}
.split {
    flex: none;
    width: 1px;
    height: 16px;
    margin: 0 2px;
    background: #bbb;
}
.bar select {
    min-width: 0;
    height: 100%;
    background-color: #cdcdcd;
    color: #777;
}
.bar-standard {
    width: 538px;
}
.bar-styles {
    width: 498px;
}
.bar-styles select {
    flex: 1;
    padding-left: 16px;
}
.bar-styles select.near {
    padding-left: 5px;
}
.bar-styles svg {
    margin: 0 5px;
}
.bar-arch {
    width: 467px;
}
.bar-workspace {
    width: 187px;
}
.bar-workspace select {
    width: 149px;
    padding-left: 8px;
}
.bar-layers {
    width: 330px;
}
.layer-pick {
    display: flex;
    flex: 1;
    align-items: center;
    height: 100%;
    padding-left: 3px;
    background: #cdcdcd;
}
.bar-layers > svg {
    margin: 0 3px;
}
.bar .layer-pick svg {
    width: 12px;
    height: 12px;
    margin: 0 1px;
}
.layer-pick select {
    flex: 1;
    padding-left: 2px;
}
.bar-bylayer {
    gap: 5px;
    width: 484px;
    font-family: "Liberation Mono", monospace;
}
.pick {
    display: flex;
    align-items: center;
    height: 100%;
    padding-left: 4px;
    background: #cdcdcd;
}
.bar .pick svg {
    width: 11px;
    height: 11px;
    margin: 0 1px;
}
.pick select {
    flex: 1;
    font-size: 11px;
}
.pick i {
    width: 50px;
    margin-right: 5px;
    border-top: 1px solid #666;
}
.color {
    width: 128px;
}
.ltype {
    width: 134px;
}
.lweight {
    width: 107px;
}
.lweight i {
    width: 30px;
}
.plot {
    flex: 1;
    padding-left: 8px;
}
.bar-arch2 {
    width: 408px;
}

/* left palette */
.main {
    display: flex;
    flex: 1;
    min-height: 0;
}
.palette {
    width: 84px;
    background: #f0f0f0;
    overflow: hidden;
}
.palette h2 {
    height: 22px;
    margin-bottom: 3px;
    padding-left: 3px;
    line-height: 22px;
    background: #a6a6a6;
}
.palette ul {
    padding: 2px 0 3px;
    border-bottom: 1px solid #bbb;
    list-style: none;
}
.palette ul:last-child {
    border-bottom: none;
}
.palette li {
    display: flex;
    align-items: center;
    gap: 3px;
    height: 15px;
    white-space: nowrap;
}
.palette svg {
    width: 10px;
    height: 14px;
}

/* stage */
.work {
    display: flex;
    flex: 1;
    flex-direction: column;
    min-width: 0;
}
.stage {
    display: flex;
    flex: 1;
    min-height: 0;
}
.side-tools {
    display: flex;
    flex-direction: column;
    gap: 10px;
    width: 29px;
    padding: 6px 4px 0;
}
.side-tools.right {
    width: 23px;
    padding: 6px 0 0 6px;
    overflow: hidden;
}
.vbar {
    flex-direction: column;
    width: 20px;
}
.vbar .split {
    width: 16px;
    height: 1px;
    margin: 2px 0;
}
.vbar-draw {
    height: 372px;
}
.vbar-render {
    height: 122px;
}
.vbar-modify {
    height: 335px;
}
.vbar-order {
    height: 115px;
}
.view {
    display: flex;
    flex: 1;
    flex-direction: column;
    min-width: 0;
}
.canvas {
    position: relative;
    flex: 1;
    min-height: 0;
    overflow: hidden;
    background: #000;
}
.drawing {
    display: block;
    width: 100%;
    height: 100%;
}
.red {
    stroke: #7c0e11;
    stroke-width: 2;
    fill: none;
}
.axis-green {
    stroke: #1b7d1b;
    stroke-width: 2;
}
.walls {
    stroke: #85898d;
    fill: none;
}
.cyan {
    stroke: #1b9b9d;
    fill: none;
}
.leaf {
    stroke: #00f3f3;
    stroke-width: 3;
}
.yellow {
    stroke: #a8a82c;
    fill: none;
}
.yellow .mask {
    fill: #000;
}
.yellow .gap {
    fill: #000;
    stroke: none;
}
.green {
    stroke: #12902b;
    fill: none;
}
.cursor, .ucs {
    stroke: #c8c8c8;
    fill: none;
}
.cad {
    fill: #c4c4c4;
    font-family: Roboto, sans-serif;
    font-size: 38px;
    font-weight: 100;
}
.cad-cn {
    fill: #ddd;
    font-family: "Noto Sans CJK SC", sans-serif;
    font-size: 28px;
    font-weight: 100;
}
.ucs-label {
    fill: #aaa;
    font-family: Roboto, sans-serif;
    font-size: 17px;
    font-weight: 300;
}
.cube, .cube-top {
    fill: #b5b5b5;
    font-size: 16px;
    text-anchor: middle;
}
.cube-top {
    fill: #555;
    font-size: 23px;
}
.wcs {
    fill: #ccc;
    font-size: 9px;
}

/* stair dialog */
.dialog {
    position: absolute;
    top: 1px;
    left: 2px;
    width: 649px;
    height: 229px;
    background: #f0f0f0;
    font-family: "Liberation Mono", "Noto Sans CJK SC", monospace;
}
.dialog h2 {
    height: 26px;
    padding-left: 3px;
    line-height: 26px;
    background: #fff;
    color: #999;
}
.dialog-body {
    display: flex;
    height: 180px;
    padding: 6px 8px 0 11px;
}
.dialog input[type="text"], .dialog select {
    width: 80px;
    height: 21px;
    padding: 0 3px 2px;
    border: 1px solid #888;
    background-color: #fff;
    font-size: 11px;
}
.dialog .fields select {
    width: 83px;
    background-image: url("data:image/svg+xml,%3Csvg xmlns='http://www.w3.org/2000/svg' width='10' height='6'%3E%3Cpath d='M1 1l4 4 4-4' fill='none' stroke='%23555'/%3E%3C/svg%3E");
}
.fields {
    display: grid;
    grid-template-columns: 66px 83px;
    grid-auto-rows: 28px;
    align-items: center;
    align-content: start;
}
.fields .blue {
    color: #3e9be0;
}
.spin {
    display: flex;
}
.dialog .spin input {
    width: 62px;
}
.spin b {
    display: flex;
    flex-direction: column;
    gap: 1px;
}
.spin button {
    width: 16px;
    height: 10px;
    border: 1px solid #bbb;
    font-size: 7px;
    line-height: 8px;
}
.widths {
    width: 141px;
    padding-left: 6px;
}
.width-grid {
    display: grid;
    grid-template-columns: 60px 60px;
    grid-auto-rows: 27px;
    column-gap: 6px;
    align-items: center;
}
.width-grid button {
    height: 21px;
    border: 1px solid #aaa;
    background: #ddd;
}
.width-grid label {
    padding-left: 3px;
}
.dialog .width-grid input {
    width: 60px;
    height: 22px;
}
.side-grid {
    display: flex;
    gap: 13px;
    margin: 22px 0 0 -4px;
}
fieldset {
    min-width: 0;
    margin: 0;
    padding: 0 5px;
    border: 1px solid #ddd;
}
legend {
    padding: 0 2px;
    line-height: 16px;
    white-space: nowrap;
}
.dialog fieldset label, .beams label {
    display: flex;
    align-items: center;
    gap: 3px;
    height: 21px;
    white-space: nowrap;
}
.side-grid fieldset {
    flex: none;
    width: 64px;
    height: 63px;
    padding: 0 4px;
}
.side-grid fieldset label {
    padding-left: 4px;
}
.beams {
    padding-top: 13px;
}
.dialog input[type="radio"], .dialog input[type="checkbox"] {
    flex: none;
    appearance: none;
    width: 14px;
    height: 14px;
    border: 1px solid #666;
    background: #fff;
}
.dialog input[type="radio"] {
    border-radius: 50%;
}
.dialog input[type="radio"]:checked {
    background: radial-gradient(circle, #222 4px, #fff 5px);
}
.options {
    display: grid;
    grid-template-columns: 84px 84px;
    grid-template-rows: 64px 104px;
    column-gap: 6px;
    width: 178px;
}
.landing {
    grid-column: 1 / 3;
    height: 63px;
}
.shapes {
    display: flex;
    gap: 12px;
    padding-left: 8px;
}
.landing-width {
    display: flex;
    justify-content: space-between;
    padding: 0 14px 0 12px;
}
.dialog .landing-width input {
    width: 58px;
}
.align label {
    padding-left: 6px;
}
.floor label {
    padding-left: 10px;
}
.dialog .floor label {
    height: 29px;
}
.preview {
    width: 162px;
    height: 171px;
}
.preview text {
    fill: #ccc;
    font-size: 10px;
}
.more-params {
    height: 18px;
    margin: 1px 7px 0 8px;
    border-right: 1px solid #aaa;
    border-bottom: 1px solid #aaa;
}
.more-params button {
    display: flex;
    align-items: center;
    gap: 3px;
    height: 16px;
    padding-left: 4px;
    color: #2a1fc4;
}
.more-params svg {
    width: 12px;
    height: 12px;
}

/* hint over the drawing */
.tip {
    position: absolute;
    top: 477px;
    left: 324px;
    width: 338px;
    height: 169px;
    padding: 8px 30px;
    background: rgba(37, 93, 148, 0.88);
    color: #fff;
}
.tip p {
    font-family: "Open Sans", "Noto Sans CJK SC", sans-serif;
    font-size: 25px;
    font-weight: 700;
    line-height: 38px;
}
.tip .tip-key {
    padding: 10px 0 0 10px;
    white-space: nowrap;
}

/* layout tabs and scroll bars */
.layout-tabs {
    display: flex;
    height: 17px;
    background: #f0f0f0;
    font-size: 12px;
}
.pager {
    width: 62px;
    height: 16px;
}
.layout-tabs button {
    padding: 0 6px;
    font-family: "Liberation Mono", "Noto Sans CJK SC", monospace;
    font-size: 11px;
    line-height: 16px;
}
.layout-tabs .slash {
    width: 8px;
    height: 16px;
}
.layout-tabs .current {
    padding: 0 11px;
    background: #000;
    color: #fff;
    font-size: 12px;
    clip-path: polygon(0 0, 100% 0, 88% 100%, 12% 100%);
}
.hscroll {
    margin-left: auto;
    width: 470px;
    padding-left: 10px;
    border-left: 4px solid #ccc;
    font-size: 16px;
    line-height: 14px;
}
.vscroll {
    display: flex;
    flex-direction: column;
    align-items: center;
    gap: 140px;
    width: 18px;
    padding-top: 6px;
    background: #f0f0f0;
}
.vscroll svg {
    width: 10px;
    height: 6px;
}
.vscroll i {
    width: 16px;
    height: 17px;
    background: #cdcdcd;
}

/* command line */
.command {
    display: flex;
    height: 43px;
    padding: 0 0 0 3px;
    margin-top: 4px;
}
.command-grip {
    width: 25px;
    padding-top: 14px;
    background: linear-gradient(#5a5a5a, #404040);
    color: #eee;
    text-align: center;
}
.command-box {
    flex: 1;
    background: #fff;
}
.history {
    height: 23px;
    background: #c9c9c9;
    border-bottom: 1px solid #aaa;
}
.prompt {
    display: flex;
    align-items: center;
    height: 24px;
    padding-left: 4px;
    font-family: "DejaVu Sans Mono", "Noto Sans CJK SC", monospace;
}
.prompt-icon {
    width: 16px;
    background: #ccc;
    color: #666;
    font-size: 10px;
    line-height: 15px;
}
.prompt-drop {
    width: 17px;
    padding-left: 3px;
    color: #777;
    font-size: 10px;
}
.prompt p {
    font-size: 16px;
    line-height: 20px;
    white-space: nowrap;
}
.prompt button {
    margin-right: 7px;
    background: #d9d9d9;
    border-radius: 3px;
}
.prompt button:last-of-type {
    margin-right: 0;
}
.prompt b {
    color: #2a20c8;
}

/* video watermark */
.video-logo {
    position: absolute;
    top: 46px;
    left: 50px;
    display: flex;
    align-items: center;
    height: 52px;
    color: #fff;
    font-family: "Noto Sans CJK SC", sans-serif;
    font-size: 42px;
    font-weight: 700;
    font-style: italic;
    line-height: 52px;
    -webkit-text-stroke: 8px #333;
    paint-order: stroke fill;
}
.video-logo .latin {
    font-family: Lato, sans-serif;
    font-size: 43px;
    font-style: normal;
    font-weight: 600;
}
.video-logo svg {
    width: 26px;
    height: 44px;
}

/* site badge */
.site-logo {
    position: absolute;
    right: 5px;
    bottom: 19px;
    display: flex;
    align-items: center;
    width: 422px;
    height: 192px;
    padding: 16px 0 0 37px;
    background: #fdfdfd;
    color: #111;
}
.site-logo svg {
    width: 116px;
    height: 94px;
}
.site-name {
    display: flex;
    flex-direction: column;
    font-style: italic;
    white-space: nowrap;
}
.site-name strong {
    font-family: "Noto Sans CJK SC", sans-serif;
    font-size: 45px;
    font-weight: 900;
    line-height: 44px;
}
.site-name span {
    font-size: 30px;
    font-weight: 500;
    line-height: 36px;
}
```
FILE: script.js
```javascript
const icon = name => `<svg aria-hidden="true"><use href="#${name}"/></svg>`;

document.querySelectorAll('[data-icons]').forEach(bar => {
    bar.innerHTML = bar.dataset.icons.split(' ').map(name => {
        if (name === '|') return '<span class="split"></span>';
        return `<button class="tool ${name}" aria-label="${name}">${icon(name)}</button>`;
    }).join('');
});

document.querySelectorAll('[data-icon]').forEach(item => {
    item.insertAdjacentHTML('afterbegin', icon(item.dataset.icon));
});
```
